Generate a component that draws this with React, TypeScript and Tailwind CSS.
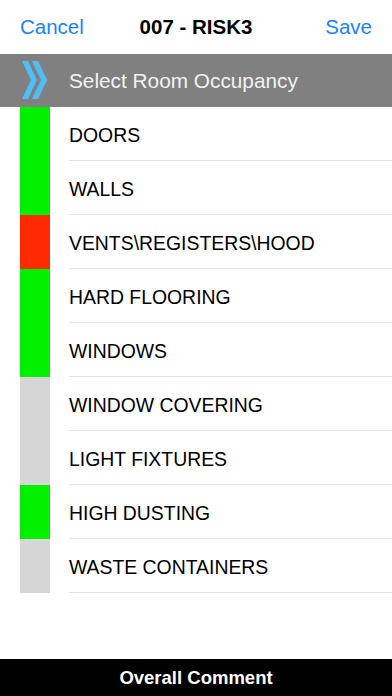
import React from 'react';

type Item = { label: string; color: string };

const items: Item[] = [
    { label: 'DOORS', color: 'bg-[#00f000]' },
    { label: 'WALLS', color: 'bg-[#00f000]' },
    { label: 'VENTS\\REGISTERS\\HOOD', color: 'bg-[#ff2a00]' },
    { label: 'HARD FLOORING', color: 'bg-[#00f000]' },
    { label: 'WINDOWS', color: 'bg-[#00f000]' },
    { label: 'WINDOW COVERING', color: 'bg-[#d6d6d6]' },
    { label: 'LIGHT FIXTURES', color: 'bg-[#d6d6d6]' },
    { label: 'HIGH DUSTING', color: 'bg-[#00f000]' },
    { label: 'WASTE CONTAINERS', color: 'bg-[#d6d6d6]' },
];

const Chevrons: React.FC = () => (
    <svg width="30" height="40" viewBox="0 0 30 40" className="block">
        <polygon points="0,0 6,0 15,19 6,38 0,38 9,19" fill="#4fbdf6" />
        <polygon points="10,0 16,0 25,19 16,38 10,38 19,19" fill="#4fbdf6" />
    </svg>
);

export default function App() {
    return (
        <div className="w-[392px] h-[696px] bg-white flex flex-col overflow-hidden font-['Liberation_Sans',Arial,sans-serif]">
            {/* nav bar */}
            <div className="h-[54px] grid grid-cols-[1fr_auto_1fr] items-center px-5 shrink-0">
                <span className="text-[20.5px] text-[#1a82fb]">Cancel</span>
                <span className="text-[20.5px] font-bold text-black">007 - RISK3</span>
                <span className="text-[20.5px] text-[#1a82fb] text-right">Save</span>
            </div>

            {/* section header */}
            <div className="h-[53px] bg-[#808080] flex items-center shrink-0">
                <div className="w-[69px] pl-[22px] flex items-center">
                    <Chevrons />
                </div>
                <span className="text-[20.8px] text-[#f2f2f2]">Select Room Occupancy</span>
            </div>

            {/* list */}
            <div className="flex flex-col">
                {items.map((item) => (
                    <div key={item.label} className="h-[54px] flex">
                        <div className="w-[69px] pl-5 shrink-0">
                            <div className={`w-[30px] h-full ${item.color}`} />
                        </div>
                        <div className="flex-1 flex items-center pt-[5px] border-b border-[#e3e3e3]">
                            <span className="text-[19.4px] text-black">{item.label}</span>
                        </div>
                    </div>
                ))}
            </div>

            <div className="flex-1" />

            {/* bottom bar */}
            <div className="h-[37px] bg-black flex items-center justify-center shrink-0">
                <span className="text-[18.5px] font-bold text-white">Overall Comment</span>
            </div>
        </div>
    );
}
